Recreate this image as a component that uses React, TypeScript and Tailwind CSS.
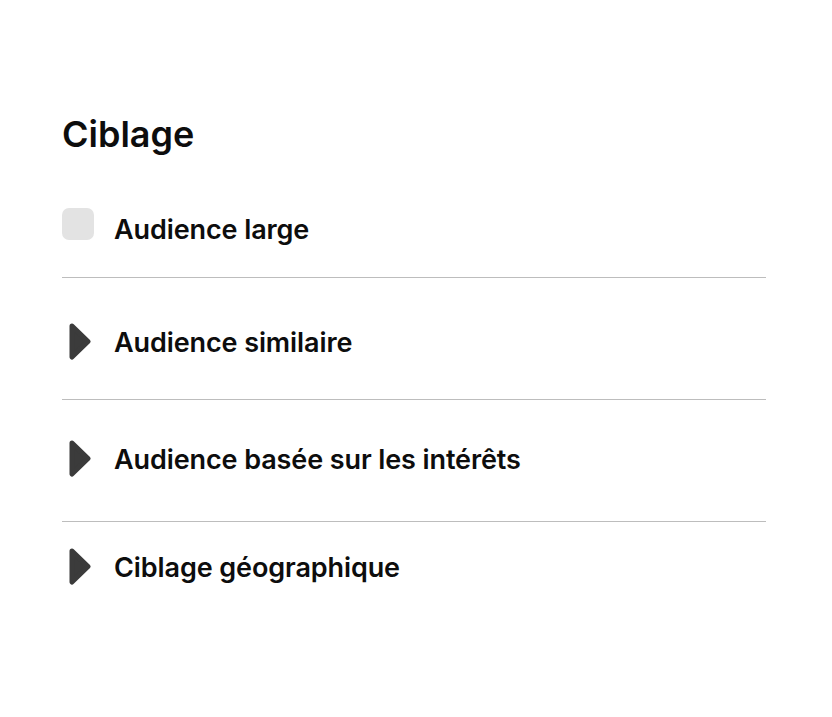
import React from "react";

const font = { fontFamily: "Inter, 'Noto Sans', sans-serif" };

function Caret() {
  return (
    <svg width="22" height="37" viewBox="0 0 22 37" className="shrink-0">
      <polygon
        points="3,3 19,18.5 3,34"
        fill="#3b3b3b"
        stroke="#3b3b3b"
        strokeWidth="5"
        strokeLinejoin="round"
      />
    </svg>
  );
}

function Divider() {
  return <div className="h-px w-full bg-[#bdbdbd]" />;
}

export default function App() {
  const rows = [
    { label: "Audience similaire", top: "mt-[45px]", bottom: "mb-[39px]" },
    { label: "Audience basée sur les intérêts", top: "mt-[40px]", bottom: "mb-[44px]" },
    { label: "Ciblage géographique", top: "mt-[26px]", bottom: "mb-0" },
  ];
  return (
    <div className="min-h-[717px] w-[832px] bg-white text-[#0d0d0d]" style={font}>
      <div className="pl-[62px] pr-[66px] pt-[111px]">
        <h2 className="text-[36px] font-semibold leading-[46px]">Ciblage</h2>
        <div className="mt-[51px] flex h-[37px] items-start gap-5">
          <span className="h-8 w-8 shrink-0 rounded-[7px] bg-[#e3e3e3]" />
          <span className="mt-[6px] text-[27px] font-semibold leading-[31px] tracking-[-0.1px]">Audience large</span>
        </div>
        <div className="mt-[32px]">
          <Divider />
        </div>
        {rows.map((r, i) => (
          <div key={r.label}>
            <div className={`${r.top} ${r.bottom} flex h-[37px] items-start gap-[23px] pl-[7px]`}>
              <Caret />
              <span className="mt-[5px] text-[27px] font-semibold leading-[30px] tracking-[-0.1px]">{r.label}</span>
            </div>
            {i < rows.length - 1 && <Divider />}
          </div>
        ))}
      </div>
    </div>
  );
}
